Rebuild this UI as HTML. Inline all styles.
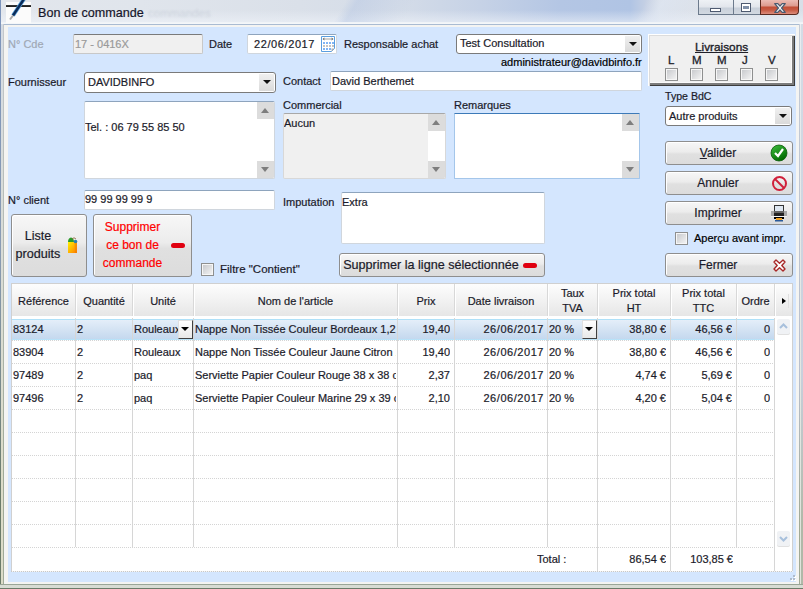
<!DOCTYPE html>
<html><head><meta charset="utf-8">
<style>
*{box-sizing:border-box;margin:0;padding:0}
html,body{width:803px;height:589px;overflow:hidden;background:#d8e0ea}
body{position:relative;font-family:"Liberation Sans",sans-serif;font-size:11px;color:#1b1b2a;-webkit-text-stroke:0.2px currentColor}
.a{position:absolute}
.lbl{position:absolute;white-space:nowrap;line-height:13px}
.inp{position:absolute;background:#fff;border:1px solid #d0d6dd;border-top-color:#8ea4bd;border-radius:2px;white-space:nowrap;overflow:hidden;padding-left:1px;line-height:18px}
.cmb{position:absolute;background:#fff;border:1px solid #7a7a7a;border-radius:3px;white-space:nowrap;overflow:hidden;padding-left:3px;line-height:17px}
.btn{position:absolute;border:1px solid #8e8e8e;border-radius:3px;box-shadow:inset 1px 1px 0 #fff;background:linear-gradient(#f7f7f7 0%,#ececec 45%,#e0e0e0 55%,#dcdcdc 100%);text-align:center;white-space:nowrap;font-size:12px}
.dd{position:absolute;right:1px;top:1px;bottom:1px;width:15px;background:linear-gradient(#f0f0f0,#dadada)}
.dd:after{content:"";position:absolute;left:4px;top:6px;border-left:4px solid transparent;border-right:4px solid transparent;border-top:4px solid #111}
.cb{position:absolute;width:13px;height:13px;border:1px solid #8e8f8f;background:linear-gradient(135deg,#c4c6ca,#f6f6f6);box-shadow:inset 0 0 0 1px #f6f6f6}
.sb{position:absolute;top:0;bottom:0;right:0;width:17px;background:#fff}
.sbu,.sbd{position:absolute;left:0;width:17px;height:17px;background:#dcdcdc}
.sbu{top:0}.sbd{bottom:0}
.sbu:after{content:"";position:absolute;left:4px;top:6px;border-left:4.5px solid transparent;border-right:4.5px solid transparent;border-bottom:5px solid #7e7e7e}
.sbd:after{content:"";position:absolute;left:4px;top:6px;border-left:4.5px solid transparent;border-right:4.5px solid transparent;border-top:5px solid #7e7e7e}
.vl{position:absolute;width:1px;background:#d6d6d6}
.hl{position:absolute;height:1px;background-image:linear-gradient(90deg,#d4d4d4 50%,transparent 50%);background-size:2px 1px}
.c{position:absolute;white-space:nowrap;overflow:hidden;line-height:13px}
.r{text-align:right}
.hd{position:absolute;text-align:center;white-space:nowrap;line-height:15px}
</style></head><body>
<!-- title bar -->
<div class="a" style="left:0;top:0;width:803px;height:24px;background:linear-gradient(rgba(255,255,255,0) 0,rgba(255,255,255,0) 10px,rgba(240,244,250,0.55) 22px),linear-gradient(90deg,#e2e6ec 0,#e0e5ec 140px,#dae0e9 300px,#d4dce8 400px,#c6d2e6 480px,#b4c6e4 560px,#b0c4e4 630px,#c8d2e4 648px,#d8dee8 660px,#dde2ea 700px,#d8dfe8 803px)"></div>
<div class="a" style="left:0;top:0;width:803px;height:24px;background:linear-gradient(120deg,transparent 0,transparent 300px,rgba(170,190,225,0.35) 310px,transparent 360px,transparent 560px,rgba(226,234,246,0.5) 575px,transparent 610px)"></div>
<div class="a" style="left:148px;top:6px;font-size:11.5px;line-height:15px;color:rgba(150,160,175,0.3);filter:blur(0.8px);-webkit-text-stroke:0;white-space:nowrap">commandes</div>
<div class="a" style="left:0;top:22px;width:803px;height:2px;background:linear-gradient(#eef2f6,#f6f8fa)"></div>
<div class="a" style="left:6px;top:0;width:25px;height:23px;background:#fbfbfb"></div>
<div class="a" style="left:6px;top:5px;width:25px;height:2px;background:linear-gradient(#3a3a3a,#1a1a1a)"></div>
<svg class="a" style="left:6px;top:0" width="25" height="23"><rect x="0" y="0" width="25" height="2" fill="#e4e6ea"/><line x1="18" y1="-1" x2="7" y2="15.5" stroke="#5aa0d8" stroke-width="4"/><line x1="18" y1="-1" x2="7" y2="15.5" stroke="#0a2a58" stroke-width="2.4"/><line x1="7" y1="15.5" x2="4" y2="19.5" stroke="#a8a8a8" stroke-width="2"/></svg>
<div class="lbl" style="left:38px;top:6px;font-size:12.6px;color:#15152a;line-height:15px">Bon de commande</div>
<!-- caption buttons -->
<div class="a" style="left:698px;top:0;width:35px;height:15px;border:1px solid #6c7a8c;border-top:0;border-right:0;background:linear-gradient(#eef1f5 0,#e2e6ec 7px,#c8d0da 8px,#d4dae2 15px)"></div>
<div class="a" style="left:710px;top:8px;width:11px;height:4px;border:1px solid #4e5a70;background:#fff"></div>
<div class="a" style="left:733px;top:0;width:27px;height:15px;border:1px solid #6c7a8c;border-top:0;border-right:0;background:linear-gradient(#eef1f5 0,#e2e6ec 7px,#c8d0da 8px,#d4dae2 15px)"></div>
<div class="a" style="left:741px;top:3px;width:10px;height:9px;border:1px solid #4e5a70;background:#fff"></div>
<div class="a" style="left:743px;top:6px;width:6px;height:3px;background:#8090a8"></div>
<div class="a" style="left:760px;top:0;width:39px;height:15px;border:1px solid #5a2a20;border-top:0;border-radius:0 0 4px 0;background:linear-gradient(#ecbcb4 0,#dc9a8e 6px,#c24e36 7px,#c65a44 10px,#dc8c7c 14px)"></div>
<svg class="a" style="left:774px;top:3px" width="12" height="10"><path d="M0.7 0.7 H3.8 L6 3 L8.2 0.7 H11.3 L7.6 5 L11.3 9.3 H8.2 L6 7 L3.8 9.3 H0.7 L4.4 5 Z" fill="#f4f4f4" stroke="#4a5a70" stroke-width="1.2" stroke-linejoin="round"/></svg>

<!-- window frame -->
<div class="a" style="left:0;top:24px;width:803px;height:565px;background:#f4f4f2"></div>
<div class="a" style="left:0;top:0;width:1px;height:589px;background:linear-gradient(#7c94bc,#8a9cb4 250px,#6c7c6a 500px)"></div>
<div class="a" style="left:1px;top:24px;width:2px;height:565px;background:linear-gradient(#d6dce4,#dcdcc8 450px)"></div>
<div class="a" style="left:3px;top:24px;width:1px;height:565px;background:linear-gradient(#c4c8cc,#a0aa98 450px)"></div>
<div class="a" style="left:4px;top:24px;width:795px;height:1px;background:#a9bbd2"></div>
<div class="a" style="left:799px;top:24px;width:1px;height:565px;background:linear-gradient(#c4ccd8,#b8c0d0 350px,#a0aa98 500px)"></div>
<div class="a" style="left:800px;top:24px;width:1px;height:565px;background:linear-gradient(#e8ecf0,#e0e4dc 500px)"></div>
<div class="a" style="left:801px;top:24px;width:2px;height:565px;background:linear-gradient(#d4dce6,#c8d0dc 350px,#b0b8a8 500px)"></div>
<div class="a" style="left:0;top:584px;width:803px;height:5px;background:linear-gradient(#9aa698 0,#9aa698 1px,#d8dcd4 1px,#d8dcd4 4px,#6c7c6a 4px)"></div>
<div class="a" style="left:8px;top:27px;width:788px;height:555px;background:#d4e6fe"></div>
<!-- row 1 -->
<div class="lbl" style="left:8px;top:38px;color:#a0a8b4">N° Cde</div>
<div class="inp" style="left:73px;top:34px;width:130px;height:20px;background:#f0f0f0;color:#9a9a9a;border-color:#c8c8c8;border-top-color:#7a7a7a">17 - 0416X</div>
<div class="lbl" style="left:209px;top:38px">Date</div>
<div class="inp" style="left:247px;top:34px;width:90px;height:20px;padding-left:6px;letter-spacing:0.6px">22/06/2017</div>
<svg class="a" style="left:321px;top:36px" width="15" height="17">
<path d="M0.5 0.5 H13.5 V12.5 L10.5 15.5 H0.5 Z" fill="#fff" stroke="#5a9ee0"/>
<rect x="4" y="2" width="6" height="2" fill="#d0d0d0"/>
<path d="M1.5 3 L3.5 1.5 V4.5 Z M12.5 3 L10.5 1.5 V4.5 Z" fill="#606060"/>
<g fill="#80b4f4"><rect x="2" y="6" width="2" height="2"/><rect x="5" y="6" width="2" height="2"/><rect x="8" y="6" width="2" height="2"/><rect x="11" y="6" width="2" height="2"/>
<rect x="2" y="12" width="2" height="2"/><rect x="5" y="12" width="2" height="2"/><rect x="8" y="12" width="2" height="2"/></g>
<g fill="#c4c4c4"><rect x="2" y="9" width="2" height="2"/><rect x="5" y="9" width="2" height="2"/><rect x="8" y="9" width="2" height="2"/><rect x="11" y="9" width="2" height="2"/></g>
<path d="M10.5 15.5 L10.5 12.5 L13.5 12.5 Z" fill="#b0b0b0"/>
</svg>
<div class="lbl" style="left:344px;top:38px">Responsable achat</div>
<div class="cmb" style="left:456px;top:34px;width:186px;height:20px">Test Consultation<div class="dd"></div></div>
<div class="lbl" style="left:501px;top:56px;color:#000">administrateur@davidbinfo.fr</div>

<!-- row 2 -->
<div class="lbl" style="left:8px;top:76px">Fournisseur</div>
<div class="cmb" style="left:84px;top:72px;width:192px;height:21px;line-height:18px">DAVIDBINFO<div class="dd"></div></div>
<div class="lbl" style="left:283px;top:75px">Contact</div>
<div class="inp" style="left:330px;top:71px;width:312px;height:20px">David Berthemet</div>

<!-- memos -->
<div class="inp" style="left:84px;top:101px;width:191px;height:78px;padding-top:16px;padding-left:0">Tel. : 06 79 55 85 50<div class="sb"><div class="sbu"></div><div class="sbd"></div></div></div>
<div class="lbl" style="left:283px;top:99px">Commercial</div>
<div class="inp" style="left:283px;top:113px;width:163px;height:66px;background:#f0f0f0;line-height:16px;padding-top:1px;padding-left:0;border-color:#d8d8d8;border-top-color:#a8a8a8">Aucun<div class="sb"><div class="sbu"></div><div class="sbd"></div></div></div>
<div class="lbl" style="left:454px;top:99px">Remarques</div>
<div class="inp" style="left:454px;top:113px;width:186px;height:66px;border-color:#a4c6ea;border-top-color:#3d7ab8;border-radius:1px"><div class="sb"><div class="sbu"></div><div class="sbd"></div></div></div>

<!-- livraisons -->
<div class="a" style="left:648px;top:34px;width:147px;height:52px;background:#f0f0f0;border:1px solid #fff;border-right:0;border-bottom:0;box-shadow:inset 1px 1px 0 #dcdcdc,inset -1px -1px 0 #3c3c3c,inset -3px -3px 0 #7c7c7c,inset -4px -4px 0 #fafafa"></div>
<div class="lbl" style="left:695px;top:41px;font-size:11.8px;text-decoration:underline;color:#202028;-webkit-text-stroke:0.35px #202028">Livraisons</div>
<div class="lbl" style="left:668px;top:54px;font-size:11.5px;color:#202028;-webkit-text-stroke:0.3px #202028">L</div>
<div class="lbl" style="left:692px;top:54px;font-size:11.5px;color:#202028;-webkit-text-stroke:0.3px #202028">M</div>
<div class="lbl" style="left:717px;top:54px;font-size:11.5px;color:#202028;-webkit-text-stroke:0.3px #202028">M</div>
<div class="lbl" style="left:742px;top:54px;font-size:11.5px;color:#202028;-webkit-text-stroke:0.3px #202028">J</div>
<div class="lbl" style="left:768px;top:54px;font-size:11.5px;color:#202028;-webkit-text-stroke:0.3px #202028">V</div>
<div class="cb" style="left:665px;top:68px"></div>
<div class="cb" style="left:690px;top:68px"></div>
<div class="cb" style="left:715px;top:68px"></div>
<div class="cb" style="left:740px;top:68px"></div>
<div class="cb" style="left:765px;top:68px"></div>

<!-- right panel -->
<div class="lbl" style="left:665px;top:90px;font-size:10.6px">Type BdC</div>
<div class="cmb" style="left:665px;top:106px;width:127px;height:20px;padding-top:1px">Autre produits<div class="dd"></div></div>
<div class="btn" style="left:665px;top:141px;width:128px;height:24px;line-height:22px;padding-right:22px"><u>V</u>alider</div>
<div class="btn" style="left:665px;top:171px;width:128px;height:24px;line-height:22px;padding-right:22px">Annuler</div>
<div class="btn" style="left:665px;top:201px;width:128px;height:24px;line-height:22px;padding-right:22px">Imprimer</div>
<div class="cb" style="left:675px;top:232px"></div>
<div class="lbl" style="left:694px;top:232px;color:#000">Aperçu avant impr.</div>
<div class="btn" style="left:665px;top:253px;width:128px;height:24px;line-height:22px;padding-right:22px">Fermer</div>
<!-- icons -->
<svg class="a" style="left:770px;top:144px" width="18" height="18"><defs><linearGradient id="gg" x1="0" y1="0" x2="0.6" y2="1"><stop offset="0" stop-color="#40c040"/><stop offset="1" stop-color="#006a00"/></linearGradient></defs><circle cx="9" cy="9" r="8" fill="url(#gg)" stroke="#0a5a0a" stroke-width="0.8"/><path d="M5 9 L8 12 L13 5" stroke="#fff" stroke-width="2.2" fill="none"/></svg>
<svg class="a" style="left:771px;top:175px" width="17" height="17"><circle cx="8.5" cy="8.5" r="6.5" fill="none" stroke="#d0203a" stroke-width="2"/><line x1="4" y1="4" x2="13" y2="13" stroke="#d0203a" stroke-width="2"/></svg>
<svg class="a" style="left:770px;top:204px" width="18" height="18"><rect x="4.5" y="1.5" width="9" height="6" fill="#dfe8f2" stroke="#333" stroke-width="1"/><rect x="1" y="7" width="16" height="5" fill="#a8a8a8"/><rect x="4" y="7" width="10" height="5" fill="#222"/><rect x="4" y="7" width="10" height="2" fill="#666"/><rect x="1" y="12" width="16" height="1" fill="#f4f4f4"/><rect x="4" y="13" width="10" height="2" fill="#000"/><rect x="6" y="14" width="6" height="2" fill="#f0a020"/><rect x="5" y="16" width="8" height="1.5" fill="#2a5a9a"/></svg>
<svg class="a" style="left:773px;top:259px" width="13" height="13"><path d="M3 1 L6.5 4.2 L10 1 L12 3 L8.8 6.5 L12 10 L10 12 L6.5 8.8 L3 12 L1 10 L4.2 6.5 L1 3 Z" fill="#fff" stroke="#a82828" stroke-width="1.4" stroke-linejoin="round"/></svg>

<!-- row client -->
<div class="lbl" style="left:8px;top:194px">N° client</div>
<div class="inp" style="left:84px;top:190px;width:191px;height:20px;padding-left:0;line-height:17px">99 99 99 99 9</div>
<div class="lbl" style="left:283px;top:196px">Imputation</div>
<div class="inp" style="left:341px;top:192px;width:204px;height:52px;line-height:18px;padding-left:0">Extra</div>
<div class="btn" style="left:11px;top:214px;width:76px;height:63px;line-height:18px;padding-top:12px;padding-right:22px;font-size:12.6px">Liste<br>produits</div>
<svg class="a" style="left:67px;top:236px" width="11" height="18"><defs><linearGradient id="bg1" x1="0" y1="0" x2="1" y2="1"><stop offset="0" stop-color="#fff200"/><stop offset="1" stop-color="#ff7a00"/></linearGradient></defs><path d="M1 6 H10 V17 H1 Z" fill="url(#bg1)"/><path d="M7.5 6 H10 V17 H8 Z" fill="#f08000" opacity="0.6"/><path d="M1 6 Q1 2 4 1.5 Q7 2 7 6 Z" fill="#2a9a2a"/><circle cx="8.5" cy="5.5" r="1.8" fill="#2a80b0"/><path d="M5 3 Q7 0.5 9 3" stroke="#8a5a30" stroke-width="0.8" fill="none"/></svg>
<div class="btn" style="left:93px;top:214px;width:99px;height:63px;line-height:18px;padding-top:3px;padding-right:20px;color:#ff0000">Supprimer<br>ce bon de<br>commande</div>
<div class="a" style="left:171px;top:243px;width:14px;height:5px;border-radius:3px;background:#e00010"></div>
<div class="cb" style="left:201px;top:263px"></div>
<div class="lbl" style="left:220px;top:263px;font-size:11.5px">Filtre "Contient"</div>
<div class="btn" style="left:339px;top:253px;width:206px;height:24px;line-height:22px;padding-right:22px;font-size:12.6px">Supprimer la ligne sélectionnée</div>
<div class="a" style="left:523px;top:263px;width:14px;height:5px;border-radius:3px;background:#e00010"></div>

<!-- table -->
<div class="a" style="left:11px;top:283px;width:782px;height:289px;background:#fff;border:1px solid #d0d0d0;border-bottom:0"></div><div class="a" style="left:11px;top:571px;width:782px;height:1px;background-image:linear-gradient(90deg,#c8c8c8 50%,#f4f4f4 50%);background-size:2px 1px"></div>
<div class="a" style="left:12px;top:284px;width:780px;height:32px;background:linear-gradient(#fdfdfd,#f2f2f2 50%,#e6e6e6)"></div>
<!-- selected row -->
<div class="a" style="left:12px;top:319px;width:762px;height:21px;background:linear-gradient(#e4eef9,#d4e3f3 50%,#c4d8ee);border-top:1px solid #aee0f8;border-bottom:1px solid #b8e2f8"></div>
<div id="tbl"><div class="a" style="left:75px;top:284px;width:1px;height:32px;background:#d8d8d8"></div>
<div class="a" style="left:76px;top:284px;width:1px;height:32px;background:#fff"></div>
<div class="a" style="left:132px;top:284px;width:1px;height:32px;background:#d8d8d8"></div>
<div class="a" style="left:133px;top:284px;width:1px;height:32px;background:#fff"></div>
<div class="a" style="left:193px;top:284px;width:1px;height:32px;background:#d8d8d8"></div>
<div class="a" style="left:194px;top:284px;width:1px;height:32px;background:#fff"></div>
<div class="a" style="left:397px;top:284px;width:1px;height:32px;background:#d8d8d8"></div>
<div class="a" style="left:398px;top:284px;width:1px;height:32px;background:#fff"></div>
<div class="a" style="left:454px;top:284px;width:1px;height:32px;background:#d8d8d8"></div>
<div class="a" style="left:455px;top:284px;width:1px;height:32px;background:#fff"></div>
<div class="a" style="left:547px;top:284px;width:1px;height:32px;background:#d8d8d8"></div>
<div class="a" style="left:548px;top:284px;width:1px;height:32px;background:#fff"></div>
<div class="a" style="left:597px;top:284px;width:1px;height:32px;background:#d8d8d8"></div>
<div class="a" style="left:598px;top:284px;width:1px;height:32px;background:#fff"></div>
<div class="a" style="left:670px;top:284px;width:1px;height:32px;background:#d8d8d8"></div>
<div class="a" style="left:671px;top:284px;width:1px;height:32px;background:#fff"></div>
<div class="a" style="left:736px;top:284px;width:1px;height:32px;background:#d8d8d8"></div>
<div class="a" style="left:737px;top:284px;width:1px;height:32px;background:#fff"></div>
<div class="a" style="left:774px;top:284px;width:1px;height:32px;background:#d8d8d8"></div>
<div class="a" style="left:775px;top:284px;width:1px;height:32px;background:#fff"></div>
<div class="vl" style="left:75px;top:318px;height:229px"></div>
<div class="vl" style="left:132px;top:318px;height:229px"></div>
<div class="vl" style="left:193px;top:318px;height:229px"></div>
<div class="vl" style="left:397px;top:318px;height:229px"></div>
<div class="vl" style="left:454px;top:318px;height:229px"></div>
<div class="vl" style="left:547px;top:318px;height:229px"></div>
<div class="vl" style="left:597px;top:318px;height:253px"></div>
<div class="vl" style="left:670px;top:318px;height:253px"></div>
<div class="vl" style="left:736px;top:318px;height:229px"></div>
<div class="vl" style="left:774px;top:318px;height:253px"></div>
<div class="hl" style="left:12px;top:340px;width:762px"></div>
<div class="hl" style="left:12px;top:363px;width:762px"></div>
<div class="hl" style="left:12px;top:386px;width:762px"></div>
<div class="hl" style="left:12px;top:409px;width:762px"></div>
<div class="hl" style="left:12px;top:432px;width:762px"></div>
<div class="hl" style="left:12px;top:455px;width:762px"></div>
<div class="hl" style="left:12px;top:478px;width:762px"></div>
<div class="hl" style="left:12px;top:501px;width:762px"></div>
<div class="hl" style="left:12px;top:524px;width:762px"></div>
<div class="hl" style="left:12px;top:547px;width:762px"></div>
<div class="hd" style="left:12px;top:294px;width:63px">Référence</div>
<div class="hd" style="left:76px;top:294px;width:56px">Quantité</div>
<div class="hd" style="left:133px;top:294px;width:60px">Unité</div>
<div class="hd" style="left:194px;top:294px;width:203px">Nom de l'article</div>
<div class="hd" style="left:398px;top:294px;width:56px">Prix</div>
<div class="hd" style="left:455px;top:294px;width:92px">Date livraison</div>
<div class="hd" style="left:548px;top:286px;width:49px">Taux<br>TVA</div>
<div class="hd" style="left:598px;top:286px;width:72px">Prix total<br>HT</div>
<div class="hd" style="left:671px;top:286px;width:65px">Prix total<br>TTC</div>
<div class="hd" style="left:737px;top:294px;width:37px">Ordre</div>
<div class="a" style="left:782px;top:298px;border-top:3px solid transparent;border-bottom:3px solid transparent;border-left:4px solid #000"></div>
<div class="a" style="left:788px;top:294px;width:1px;height:14px;background:#e0e0e0"></div>
<div class="c" style="left:13px;top:323px;width:61px">83124</div>
<div class="c" style="left:77px;top:323px;width:54px">2</div>
<div class="c" style="left:134px;top:323px;width:58px">Rouleaux</div>
<div class="c" style="left:195px;top:323px;width:201px">Nappe Non Tissée Couleur Bordeaux 1,2</div>
<div class="c r" style="left:398px;top:323px;width:52px">19,40</div>
<div class="c r" style="left:455px;top:323px;width:89px;letter-spacing:0.55px">26/06/2017</div>
<div class="c" style="left:549px;top:323px;width:47px">20 %</div>
<div class="c r" style="left:598px;top:323px;width:68px">38,80 €</div>
<div class="c r" style="left:671px;top:323px;width:61px">46,56 €</div>
<div class="c r" style="left:737px;top:323px;width:33px">0</div>
<div class="c" style="left:13px;top:346px;width:61px">83904</div>
<div class="c" style="left:77px;top:346px;width:54px">2</div>
<div class="c" style="left:134px;top:346px;width:58px">Rouleaux</div>
<div class="c" style="left:195px;top:346px;width:201px">Nappe Non Tissée Couleur Jaune Citron 1,2</div>
<div class="c r" style="left:398px;top:346px;width:52px">19,40</div>
<div class="c r" style="left:455px;top:346px;width:89px;letter-spacing:0.55px">26/06/2017</div>
<div class="c" style="left:549px;top:346px;width:47px">20 %</div>
<div class="c r" style="left:598px;top:346px;width:68px">38,80 €</div>
<div class="c r" style="left:671px;top:346px;width:61px">46,56 €</div>
<div class="c r" style="left:737px;top:346px;width:33px">0</div>
<div class="c" style="left:13px;top:369px;width:61px">97489</div>
<div class="c" style="left:77px;top:369px;width:54px">2</div>
<div class="c" style="left:134px;top:369px;width:58px">paq</div>
<div class="c" style="left:195px;top:369px;width:201px">Serviette Papier Couleur Rouge 38 x 38 cm</div>
<div class="c r" style="left:398px;top:369px;width:52px">2,37</div>
<div class="c r" style="left:455px;top:369px;width:89px;letter-spacing:0.55px">26/06/2017</div>
<div class="c" style="left:549px;top:369px;width:47px">20 %</div>
<div class="c r" style="left:598px;top:369px;width:68px">4,74 €</div>
<div class="c r" style="left:671px;top:369px;width:61px">5,69 €</div>
<div class="c r" style="left:737px;top:369px;width:33px">0</div>
<div class="c" style="left:13px;top:392px;width:61px">97496</div>
<div class="c" style="left:77px;top:392px;width:54px">2</div>
<div class="c" style="left:134px;top:392px;width:58px">paq</div>
<div class="c" style="left:195px;top:392px;width:201px">Serviette Papier Couleur Marine 29 x 39 cm</div>
<div class="c r" style="left:398px;top:392px;width:52px">2,10</div>
<div class="c r" style="left:455px;top:392px;width:89px;letter-spacing:0.55px">26/06/2017</div>
<div class="c" style="left:549px;top:392px;width:47px">20 %</div>
<div class="c r" style="left:598px;top:392px;width:68px">4,20 €</div>
<div class="c r" style="left:671px;top:392px;width:61px">5,04 €</div>
<div class="c r" style="left:737px;top:392px;width:33px">0</div>
<div class="a" style="left:178px;top:320px;width:15px;height:19px;background:linear-gradient(#fff,#e8e8e8);border:1px solid #e0e0e0;border-right-color:#404040;border-bottom-color:#404040"></div>
<div class="a" style="left:181px;top:327px;border-left:4px solid transparent;border-right:4px solid transparent;border-top:4px solid #000"></div>
<div class="a" style="left:582px;top:320px;width:15px;height:19px;background:linear-gradient(#fff,#e8e8e8);border:1px solid #e0e0e0;border-right-color:#404040;border-bottom-color:#404040"></div>
<div class="a" style="left:585px;top:327px;border-left:4px solid transparent;border-right:4px solid transparent;border-top:4px solid #000"></div>
<div class="a" style="left:793px;top:575px;width:2px;height:2px;background:#b0bccc;box-shadow:1px 1px 0 #fff"></div>
<div class="a" style="left:790px;top:578px;width:2px;height:2px;background:#b0bccc;box-shadow:1px 1px 0 #fff"></div>
<div class="a" style="left:793px;top:578px;width:2px;height:2px;background:#b0bccc;box-shadow:1px 1px 0 #fff"></div>
<div class="c" style="left:537px;top:553px">Total :</div>
<div class="c r" style="left:599px;top:553px;width:67px">86,54 €</div>
<div class="c r" style="left:671px;top:553px;width:62px">103,85 €</div>
<div class="a" style="left:777px;top:319px;width:13px;height:15px;border-radius:2px;background:#f0f2f5;box-shadow:0 1px 0 #e0e0e0"></div>
<svg class="a" style="left:777px;top:319px" width="13" height="15"><path d="M3 9 L6.5 5.5 L10 9" stroke="#a8c0dc" stroke-width="2" fill="none"/></svg>
<div class="a" style="left:777px;top:531px;width:13px;height:15px;border-radius:2px;background:#f0f2f5;box-shadow:0 1px 0 #e0e0e0"></div>
<svg class="a" style="left:777px;top:531px" width="13" height="15"><path d="M3 6 L6.5 9.5 L10 6" stroke="#a8c0dc" stroke-width="2" fill="none"/></svg></div><!--/tbl-->
</body></html>
